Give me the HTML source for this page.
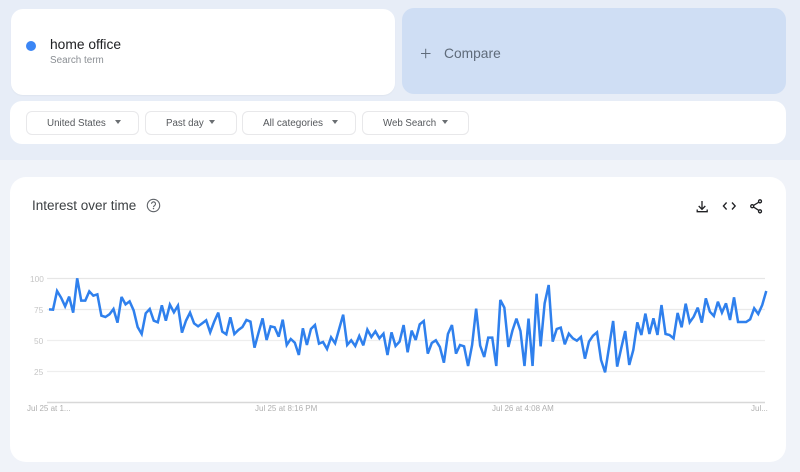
<!DOCTYPE html>
<html><head><meta charset="utf-8">
<style>
html,body{margin:0;padding:0}
body{width:800px;height:472px;overflow:hidden;background:#f0f3f9;position:relative;font-family:"Liberation Sans",sans-serif}
div{position:absolute;box-sizing:border-box}
.top{left:0;top:0;width:800px;height:160px;background:#e7edf7}
.card{background:#fff}
.chip{top:111px;height:24px;border:1px solid #e8e8ea;border-radius:6px;background:#fff;color:#55585c;line-height:22px;white-space:nowrap}
.chip span{position:absolute;top:.5px}
.chip i{position:absolute;top:8px;width:0;height:0;border-left:3.400px solid transparent;border-right:3.400px solid transparent;border-top:4px solid #6a6e72}
.t{white-space:nowrap}
.ax{font-size:8px;color:#b0b0b0;white-space:nowrap}
.ay{font-size:8.300px;color:#c6c6c6;white-space:nowrap}
svg{position:absolute;left:0;top:0}
</style></head><body>
<div class="top"></div>
<div class="card" style="left:11px;top:9px;width:384px;height:86px;border-radius:12px;box-shadow:0 1px 1px #dfe5ef"></div>
<div style="left:402px;top:8px;width:384px;height:86px;border-radius:12px;background:#cfdef4"></div>
<div class="card" style="left:10px;top:101px;width:776px;height:43px;border-radius:12px"></div>
<div class="card" style="left:10px;top:177px;width:776px;height:285px;border-radius:16px"></div>
<div style="left:26px;top:41px;width:10px;height:10px;border-radius:50%;background:#3b86f5"></div>
<div class="t" style="left:50px;top:37px;font-size:13.800px;line-height:16px;color:#202124">home office</div>
<div class="t" style="left:50px;top:54px;font-size:9.900px;line-height:13px;color:#8a8e93">Search term</div>
<div class="t" style="left:444px;top:45px;font-size:13.800px;line-height:17px;color:#5f6b7a">Compare</div>
<div class="chip" style="left:26px;width:113px;font-size:9.800px"><span style="left:20px">United States</span><i style="left:88px"></i></div>
<div class="chip" style="left:145px;width:92px;font-size:9.700px"><span style="left:20px;top:1px">Past day</span><i style="left:63px"></i></div>
<div class="chip" style="left:242px;width:114px;font-size:10px"><span style="left:20px">All categories</span><i style="left:89px"></i></div>
<div class="chip" style="left:362px;width:107px;font-size:9.700px"><span style="left:20px">Web Search</span><i style="left:79px"></i></div>
<div class="t" style="left:32px;top:198px;font-size:13.500px;line-height:16px;color:#3c4043">Interest over time</div>
<div class="ay" style="left:30px;top:274px">100</div>
<div class="ay" style="left:34px;top:305px">75</div>
<div class="ay" style="left:34px;top:336px">50</div>
<div class="ay" style="left:34px;top:367px">25</div>
<div class="ax" style="left:27px;top:404px">Jul 25 at 1...</div>
<div class="ax" style="left:255px;top:404px">Jul 25 at 8:16 PM</div>
<div class="ax" style="left:492px;top:404px">Jul 26 at 4:08 AM</div>
<div class="ax" style="left:751px;top:404px">Jul...</div>
<svg width="800" height="472" viewBox="0 0 800 472">
<path d="M421 53.500h9.500M425.700 48.800v9.500" stroke="#5f6b7a" stroke-width="1" fill="none"/>
<circle cx="153.500" cy="205.500" r="6.200" fill="none" stroke="#5f6368" stroke-width="1.100"/>
<path d="M151.500 203.800a2 2 0 1 1 3 1.800c-.7.400-1 .8-1 1.500" fill="none" stroke="#5f6368" stroke-width="1.100"/>
<circle cx="153.500" cy="208.600" r=".7" fill="#5f6368"/>
<g fill="none" stroke="#202124" stroke-width="1.300">
<path d="M702 201v8M698.700 206l3.300 3.300 3.300-3.300M697.200 209.500v2.200h10v-2.200"/>
<path d="M726.600 202.500l-3.200 3.500 3.200 3.500M732 202.500l3.200 3.500-3.200 3.500"/>
<path d="M760 201.500l-7.800 4.700 7.800 5"/>
<circle cx="760" cy="201.300" r="1.500" fill="#fff"/><circle cx="752.200" cy="206.200" r="1.500" fill="#fff"/><circle cx="760" cy="211.300" r="1.500" fill="#fff"/>
</g>
<g fill="none" stroke-width="1.300">
<path d="M47 278.500h718" stroke="#e6e6e6"/>
<path d="M47 309.500h718" stroke="#eaeaea"/>
<path d="M47 340.500h718" stroke="#eeeeee"/>
<path d="M47 371.500h718" stroke="#eeeeee"/>
<path d="M47 402.500h718" stroke="#d8d8d8" stroke-width="1.600"/>
</g>
<polyline transform="translate(49,265) scale(.3358,.3333)" fill="none" stroke="#2f80ed" stroke-width="7.500" stroke-linejoin="miter" stroke-miterlimit="3" points="0,133 12,134 24,78 36,98 48,124 60,95 72,143 84,40 96,107 108,107 120,79 132,92 144,88 156,152 168,156 180,148 192,132 204,173 216,96 228,118 240,109 252,136 264,186 276,207 288,145 300,132 312,167 324,172 336,121 348,167 360,119 372,142 384,122 396,203 408,167 420,143 432,175 444,184 456,175 468,166 480,202 492,170 504,143 516,200 528,208 540,157 552,207 564,195 576,186 588,165 600,170 612,248 624,203 636,160 648,225 660,184 672,187 684,215 696,164 708,240 720,222 732,233 744,270 756,190 768,240 780,192 792,180 804,236 816,231 828,252 840,217 852,235 864,192 876,149 888,240 900,226 912,243 924,213 936,241 948,194 960,216 972,199 984,220 996,206 1008,270 1020,202 1032,243 1044,230 1056,180 1068,262 1080,197 1092,225 1104,178 1116,168 1128,266 1140,234 1152,226 1164,246 1176,293 1188,207 1200,180 1212,266 1224,240 1236,244 1248,303 1260,240 1272,131 1284,242 1296,276 1308,218 1320,218 1332,303 1344,105 1356,128 1368,246 1380,197 1392,161 1404,198 1416,303 1428,161 1440,303 1452,86 1464,244 1476,115 1488,60 1500,230 1512,192 1524,188 1536,238 1548,206 1560,220 1572,227 1584,216 1596,281 1608,230 1620,212 1632,202 1644,285 1656,322 1668,245 1680,168 1692,305 1704,250 1716,198 1728,300 1740,255 1752,172 1764,210 1776,146 1788,207 1800,160 1812,210 1824,120 1836,207 1848,210 1860,220 1872,144 1884,187 1896,116 1908,172 1920,155 1932,128 1944,173 1956,100 1968,140 1980,153 1992,110 2004,143 2016,115 2028,165 2040,97 2052,171 2064,171 2076,171 2088,163 2100,130 2112,147 2124,120 2136,78"/>
</svg>
</body></html>
